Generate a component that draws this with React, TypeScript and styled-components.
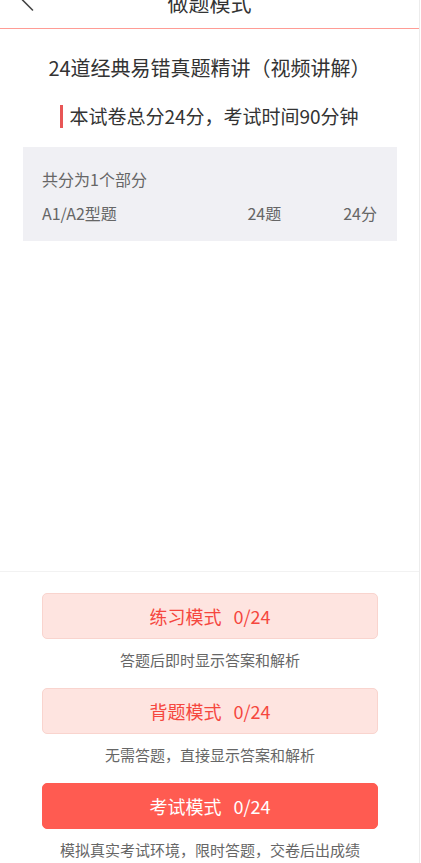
import styled, { createGlobalStyle } from "styled-components";

const GlobalStyle = createGlobalStyle`
  html, body {
    margin: 0;
    padding: 0;
    background: #ffffff;
  }
  body {
    font-family: "Noto Sans CJK SC", "Noto Sans", sans-serif;
  }
  * {
    box-sizing: border-box;
  }
`;

const Page = styled.div`
  width: 420px;
  margin-top: -16px;
  min-height: calc(100vh + 16px);
  display: flex;
  flex-direction: column;
  border-right: 1px solid #ececec;
  background: #ffffff;
`;

const Header = styled.header`
  height: 45px;
  display: grid;
  grid-template-columns: 70px 1fr 70px;
  align-items: center;
  padding-bottom: 8px;
  border-bottom: 1px solid #ff9c95;
`;

const BackBtn = styled.button`
  border: none;
  background: none;
  padding: 0 0 0 21px;
  margin-top: -4px;
  display: flex;
  align-items: center;
  color: #333;
`;

const HeaderTitle = styled.h1`
  margin: 0;
  text-align: center;
  font-size: 21px;
  font-weight: 400;
  line-height: 28px;
  color: #333;
`;

const Main = styled.main`
  flex: 1;
  display: flex;
  flex-direction: column;
`;

const PaperTitle = styled.h2`
  margin: 25px 0 0;
  text-align: center;
  font-size: 20px;
  font-weight: 400;
  line-height: 28px;
  color: #333;
`;

const Summary = styled.div`
  margin-top: 22px;
  display: flex;
  justify-content: center;
  align-items: center;
  gap: 6px;
  font-size: 19px;
  line-height: 24px;
  color: #333;
`;

const RedBar = styled.span`
  width: 3px;
  height: 23px;
  background: #e85656;
`;

const PartBox = styled.section`
  margin: 19px 22px 0 23px;
  padding: 21px 20px 17px 19px;
  background: #f0f0f4;
  display: flex;
  flex-direction: column;
  gap: 12px;
  font-size: 16px;
  line-height: 22px;
  color: #666;
`;

const PartRow = styled.div`
  display: flex;
  align-items: center;
`;

const PartName = styled.span`
  flex: 1;
`;

const PartScore = styled.span<{ $gap?: number }>`
  margin-left: ${(p) => p.$gap ?? 0}px;
`;

const Footer = styled.footer`
  border-top: 1px solid #f2f2f2;
  padding: 21px 41px 2px 42px;
  display: flex;
  flex-direction: column;
  gap: 17px;
`;

const ModeItem = styled.div`
  display: flex;
  flex-direction: column;
  gap: 10px;
`;

const ModeButton = styled.button<{ $primary?: boolean }>`
  height: 46px;
  width: 100%;
  border-radius: 5px;
  border: 1px solid ${(p) => (p.$primary ? "#ff5b51" : "#f9d4ce")};
  background: ${(p) => (p.$primary ? "#ff5b51" : "#fee4e0")};
  color: ${(p) => (p.$primary ? "#ffffff" : "#f5473e")};
  font-family: "Noto Sans CJK SC", "Noto Sans", sans-serif;
  font-size: 18px;
  display: flex;
  align-items: center;
  justify-content: center;
  padding: 0;
`;

const Count = styled.span`
  margin-left: 12px;
`;

const ModeDesc = styled.p`
  margin: 0;
  text-align: center;
  font-size: 15px;
  line-height: 22px;
  color: #666;
`;

const modes = [
  { name: "练习模式", desc: "答题后即时显示答案和解析" },
  { name: "背题模式", desc: "无需答题，直接显示答案和解析" },
  { name: "考试模式", desc: "模拟真实考试环境，限时答题，交卷后出成绩", primary: true },
];

export default function App() {
  return (
    <Page>
      <GlobalStyle />
      <Header>
        <BackBtn aria-label="返回">
          <svg width="13" height="22" viewBox="0 0 13 22" fill="none">
            <path d="M11.5 1 L1.5 11 L11.5 21" stroke="#444" strokeWidth="1.6" strokeLinecap="round" strokeLinejoin="round" />
          </svg>
        </BackBtn>
        <HeaderTitle>做题模式</HeaderTitle>
        <span />
      </Header>
      <Main>
        <PaperTitle>24道经典易错真题精讲（视频讲解）</PaperTitle>
        <Summary>
          <RedBar />
          <span>本试卷总分24分，考试时间90分钟</span>
        </Summary>
        <PartBox>
          <div>共分为1个部分</div>
          <PartRow>
            <PartName>A1/A2型题</PartName>
            <span>24题</span>
            <PartScore $gap={62}>24分</PartScore>
          </PartRow>
        </PartBox>
      </Main>
      <Footer>
        {modes.map((m) => (
          <ModeItem key={m.name}>
            <ModeButton $primary={m.primary}>
              {m.name}
              <Count>0/24</Count>
            </ModeButton>
            <ModeDesc>{m.desc}</ModeDesc>
          </ModeItem>
        ))}
      </Footer>
    </Page>
  );
}
